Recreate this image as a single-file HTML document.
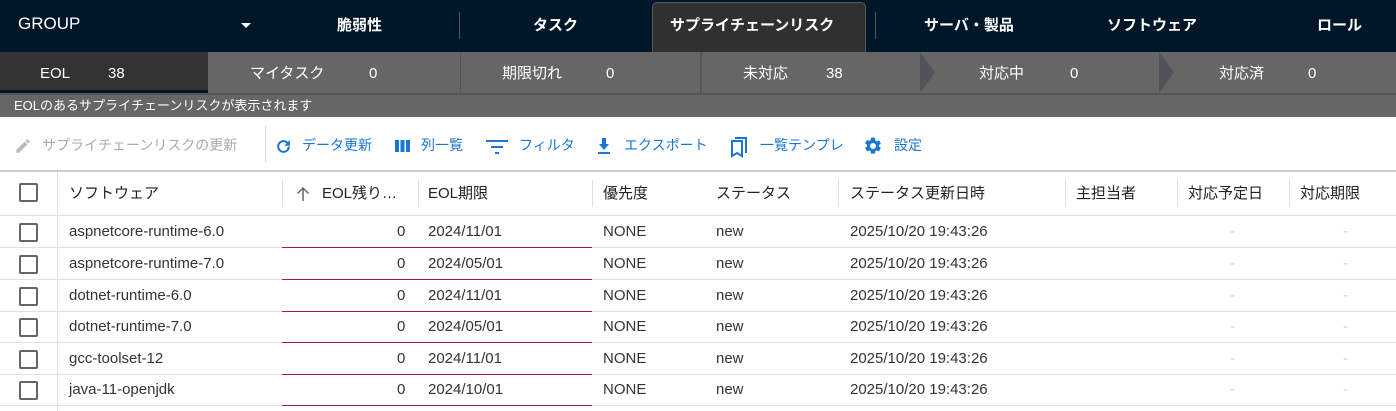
<!DOCTYPE html><html><head><meta charset="utf-8"><style>
*{box-sizing:border-box;margin:0;padding:0}
body{width:1396px;height:411px;overflow:hidden;font-family:"Liberation Sans","Noto Sans CJK JP",sans-serif;background:#fff;position:relative}
.abs{position:absolute}
.nav{left:0;top:0;width:1396px;height:52px;background:#001629}
.nav span{position:absolute;top:0;line-height:52px;color:#fff;font-size:15px;font-weight:bold;white-space:nowrap}
.tab{left:652px;top:2px;width:214px;height:50px;background:#303030;border-radius:5px 5px 0 0;border:1px solid #555;border-bottom:none}
.stat{top:52px;height:41px;background:#666;color:#fff;font-size:15px}
.stat span{position:absolute;top:0;line-height:43px;height:41px}
.tb{top:134px;line-height:22px;font-size:14px;color:#1976d2;white-space:nowrap}
.hd{top:183px;line-height:22px;font-size:15px;color:#222;white-space:nowrap}
.sep{top:180px;width:1px;height:27px;background:#e0e0e0}
.row{left:0;width:1396px;height:32px;border-bottom:1px solid #e0e0e0;font-size:15px;color:#333}
.row span{position:absolute;top:0;line-height:31px;white-space:nowrap}
.row i{position:absolute;left:282px;width:310px;bottom:-1px;height:1px;background:#b5173f}
.cb{position:absolute;left:19px;top:7px;width:19px;height:19px;border:2px solid #666;border-radius:2px}
</style></head><body>
<div class="abs nav">
<span style="left:18px;font-weight:normal;font-size:17px;line-height:48px">GROUP</span>
<svg class="abs" style="left:241px;top:23px" width="10" height="6"><polygon points="0,0 10,0 5,5" fill="#fff"/></svg>
<span style="left:337px">脆弱性</span>
<div class="abs" style="left:459px;top:12px;width:1px;height:27px;background:#555"></div>
<span style="left:533px">タスク</span>
<div class="abs tab"></div>
<span style="left:670px">サプライチェーンリスク</span>
<div class="abs" style="left:875px;top:12px;width:1px;height:27px;background:#555"></div>
<span style="left:924px">サーバ・製品</span>
<span style="left:1107px">ソフトウェア</span>
<span style="left:1317px">ロール</span>
</div>
<div class="abs stat" style="left:0;width:1396px"></div>
<div class="abs stat" style="left:0;width:208px;background:#333"><span style="left:40px">EOL</span><span style="left:108px">38</span></div>
<div class="abs" style="left:0;top:90px;width:208px;height:3px;background:#00152a"></div>
<div class="abs" style="left:460px;top:52px;width:1px;height:41px;background:#555"></div>
<div class="abs" style="left:700px;top:52px;width:2px;height:41px;background:#555"></div>
<svg class="abs" style="left:920px;top:52px" width="16" height="41"><polygon points="0,0 15,20.5 0,41" fill="#50535a"/></svg>
<svg class="abs" style="left:1159px;top:52px" width="16" height="41"><polygon points="0,0 15,20.5 0,41" fill="#50535a"/></svg>
<div class="abs stat" style="left:208px;width:1188px;background:transparent"><span style="left:42px">マイタスク</span><span style="left:161px">0</span><span style="left:294px">期限切れ</span><span style="left:398px">0</span><span style="left:535px">未対応</span><span style="left:618px">38</span><span style="left:771px">対応中</span><span style="left:862px">0</span><span style="left:1011px">対応済</span><span style="left:1100px">0</span></div>
<div class="abs" style="left:0;top:93px;width:1396px;height:2px;background:#555"></div>
<div class="abs" style="left:0;top:95px;width:1396px;height:22px;background:#666;color:#fff;font-size:13px;line-height:21px;padding-left:14px">EOLのあるサプライチェーンリスクが表示されます</div>
<svg class="abs" style="left:14px;top:137px" width="18" height="18" viewBox="0 0 24 24"><path d="M3 17.25V21h3.75L17.81 9.94l-3.75-3.75L3 17.25zM20.71 7.04a1 1 0 000-1.41l-2.34-2.34a1 1 0 00-1.41 0l-1.83 1.83 3.75 3.75 1.83-1.83z" fill="#bbb"/></svg>
<div class="abs tb" style="left:42px;color:#aaa">サプライチェーンリスクの更新</div>
<div class="abs" style="left:265px;top:125px;width:1px;height:38px;background:#ddd"></div>
<svg class="abs" style="left:274px;top:137px" width="19" height="19" viewBox="0 0 24 24"><path d="M17.65 6.35A7.96 7.96 0 0012 4a8 8 0 108 8h-2.5A5.5 5.5 0 1112 6.5c1.52 0 2.88.62 3.88 1.62L13 11h7V4l-2.35 2.35z" fill="#1976d2"/></svg>
<div class="abs tb" style="left:302px">データ更新</div>
<svg class="abs" style="left:394px;top:139px" width="17" height="14"><rect x="1" y="1" width="4" height="12" fill="#1976d2"/><rect x="6.5" y="1" width="4" height="12" fill="#1976d2"/><rect x="12" y="1" width="4" height="12" fill="#1976d2"/></svg>
<div class="abs tb" style="left:421px">列一覧</div>
<svg class="abs" style="left:486px;top:139px" width="22" height="16"><rect x="0" y="1" width="22" height="2" fill="#1976d2"/><rect x="5" y="7" width="12" height="2" fill="#1976d2"/><rect x="9" y="13" width="4" height="2" fill="#1976d2"/></svg>
<div class="abs tb" style="left:519px">フィルタ</div>
<svg class="abs" style="left:596px;top:137px" width="16" height="19" viewBox="0 0 16 19"><path d="M6 1h4v6h3l-5 6-5-6h3z" fill="#1976d2"/><rect x="2" y="15" width="12" height="2" fill="#1976d2"/></svg>
<div class="abs tb" style="left:624px">エクスポート</div>
<svg class="abs" style="left:730px;top:136px" width="18" height="22" viewBox="0 0 18 22"><path d="M5 2h11v15M2 5h10v15l-5-3-5 3z" fill="none" stroke="#1976d2" stroke-width="2"/></svg>
<div class="abs tb" style="left:760px">一覧テンプレ</div>
<svg class="abs" style="left:863px;top:136px" width="20" height="20" viewBox="0 0 24 24"><path d="M19.14 12.94a7.1 7.1 0 000-1.880l2.03-1.58a.5.5 0 00.12-.61l-1.92-3.32a.5.5 0 00-.59-.22l-2.39.96a7 7 0 00-1.62-.94l-.36-2.54A.5.5 0 0013.9 2h-3.84a.5.5 0 00-.48.41l-.36 2.54a7 7 0 00-1.62.94l-2.39-.96a.5.5 0 00-.59.22L2.7 8.47a.5.5 0 00.12.61l2.03 1.58a7.1 7.1 0 000 1.88l-2.03 1.58a.5.5 0 00-.12.61l1.92 3.32c.12.22.37.3.59.22l2.39-.96c.5.38 1.03.7 1.620.94l.36 2.54c.05.24.25.41.48.41h3.84c.24 0 .44-.17.48-.41l.36-2.54a7 7 0 001.62-.94l2.39.96c.22.08.47 0 .59-.22l1.92-3.32a.5.5 0 00-.12-.61l-2.03-1.58zM12 15.6a3.6 3.6 0 110-7.2 3.6 3.6 0 010 7.2z" fill="#1976d2"/></svg>
<div class="abs tb" style="left:894px">設定</div>
<div class="abs" style="left:0;top:170px;width:1396px;height:2px;background:#ccc"></div>
<div class="abs" style="left:0;top:172px;width:1396px;height:44px;border-bottom:1px solid #e0e0e0"></div>
<div class="cb" style="top:183px"></div>
<div class="abs" style="left:57px;top:172px;width:1px;height:239px;background:#e0e0e0"></div>
<div class="abs hd" style="left:69px">ソフトウェア</div>
<div class="abs sep" style="left:282px"></div>
<svg class="abs" style="left:296px;top:186px" width="14" height="16" viewBox="0 0 14 16"><path d="M7 15V2M1.5 7.5L7 2l5.5 5.5" fill="none" stroke="#666" stroke-width="1.5"/></svg>
<div class="abs hd" style="left:322px">EOL残り…</div>
<div class="abs sep" style="left:418px"></div>
<div class="abs hd" style="left:428px">EOL期限</div>
<div class="abs sep" style="left:592px"></div>
<div class="abs hd" style="left:603px">優先度</div>
<div class="abs hd" style="left:716px">ステータス</div>
<div class="abs sep" style="left:838px"></div>
<div class="abs hd" style="left:850px">ステータス更新日時</div>
<div class="abs sep" style="left:1065px"></div>
<div class="abs hd" style="left:1076px">主担当者</div>
<div class="abs sep" style="left:1177px"></div>
<div class="abs hd" style="left:1188px">対応予定日</div>
<div class="abs sep" style="left:1289px"></div>
<div class="abs hd" style="left:1300px">対応期限</div>

<div class="abs row" style="top:216px"><div class="cb"></div><span style="left:69px">aspnetcore-runtime-6.0</span><span style="left:397px">0</span><span style="left:428px">2024/11/01</span><span style="left:603px">NONE</span><span style="left:716px">new</span><span style="left:850px">2025/10/20 19:43:26</span><span style="left:1230px;color:#ccc">-</span><span style="left:1343px;color:#ccc">-</span><i></i></div>
<div class="abs row" style="top:248px"><div class="cb"></div><span style="left:69px">aspnetcore-runtime-7.0</span><span style="left:397px">0</span><span style="left:428px">2024/05/01</span><span style="left:603px">NONE</span><span style="left:716px">new</span><span style="left:850px">2025/10/20 19:43:26</span><span style="left:1230px;color:#ccc">-</span><span style="left:1343px;color:#ccc">-</span><i></i></div>
<div class="abs row" style="top:280px"><div class="cb"></div><span style="left:69px">dotnet-runtime-6.0</span><span style="left:397px">0</span><span style="left:428px">2024/11/01</span><span style="left:603px">NONE</span><span style="left:716px">new</span><span style="left:850px">2025/10/20 19:43:26</span><span style="left:1230px;color:#ccc">-</span><span style="left:1343px;color:#ccc">-</span><i></i></div>
<div class="abs row" style="top:311px"><div class="cb"></div><span style="left:69px">dotnet-runtime-7.0</span><span style="left:397px">0</span><span style="left:428px">2024/05/01</span><span style="left:603px">NONE</span><span style="left:716px">new</span><span style="left:850px">2025/10/20 19:43:26</span><span style="left:1230px;color:#ccc">-</span><span style="left:1343px;color:#ccc">-</span><i></i></div>
<div class="abs row" style="top:343px"><div class="cb"></div><span style="left:69px">gcc-toolset-12</span><span style="left:397px">0</span><span style="left:428px">2024/11/01</span><span style="left:603px">NONE</span><span style="left:716px">new</span><span style="left:850px">2025/10/20 19:43:26</span><span style="left:1230px;color:#ccc">-</span><span style="left:1343px;color:#ccc">-</span><i></i></div>
<div class="abs row" style="top:374px"><div class="cb"></div><span style="left:69px">java-11-openjdk</span><span style="left:397px">0</span><span style="left:428px">2024/10/01</span><span style="left:603px">NONE</span><span style="left:716px">new</span><span style="left:850px">2025/10/20 19:43:26</span><span style="left:1230px;color:#ccc">-</span><span style="left:1343px;color:#ccc">-</span><i></i></div>
</body></html>
